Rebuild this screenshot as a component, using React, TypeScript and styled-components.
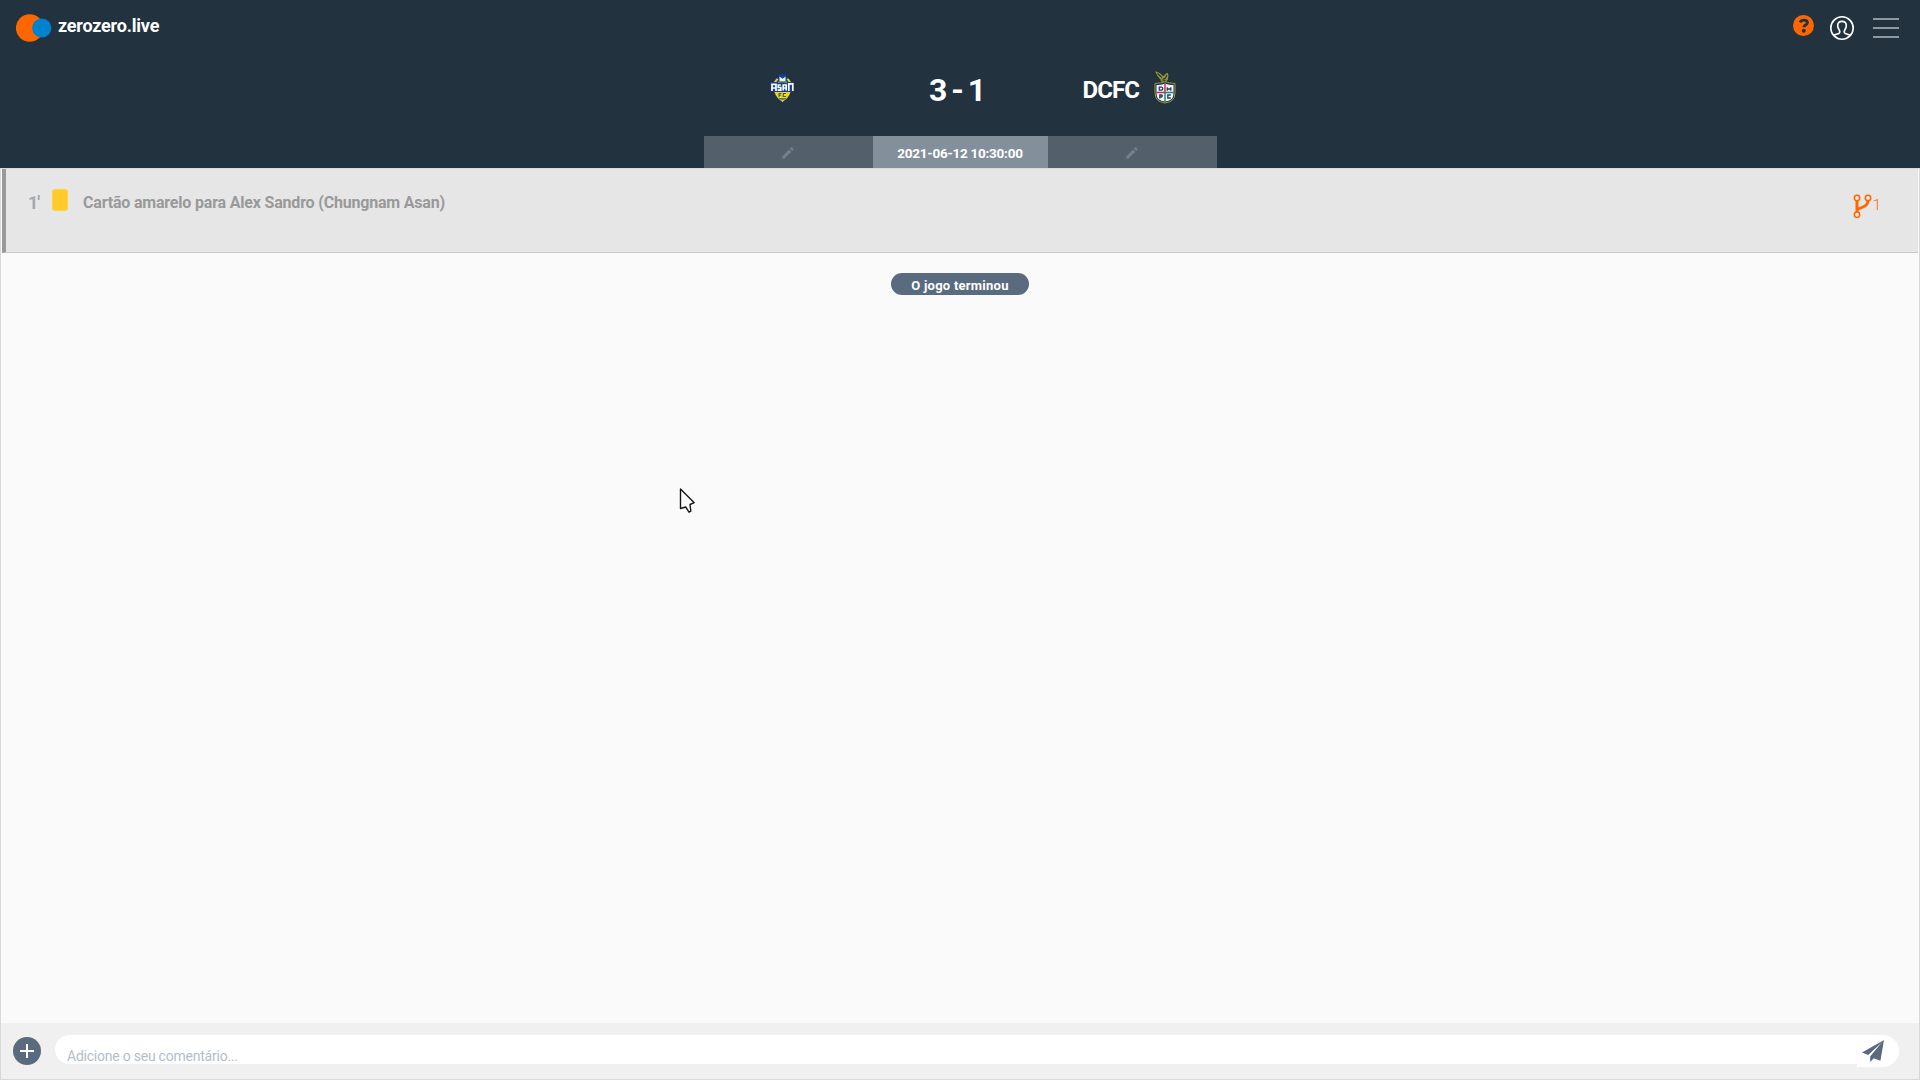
import React from "react";
import styled, { createGlobalStyle } from "styled-components";

const GlobalStyle = createGlobalStyle`
  * { box-sizing: border-box; }
  html, body { margin: 0; padding: 0; overflow: hidden; }
  body { font-family: Roboto, "Liberation Sans", sans-serif; background: #fafafa; }
  svg { display: block; flex: none; }
`;

const Page = styled.div`
  width: 1920px;
  height: 1080px;
  display: flex;
  flex-direction: column;
`;

const Header = styled.header`
  height: 168px;
  background: #22323f;
  display: flex;
  flex-direction: column;
  align-items: center;
`;

const TopBar = styled.div`
  width: 100%;
  height: 56px;
  padding: 0 21px 0 16px;
  display: flex;
  justify-content: space-between;
`;

const Brand = styled.div`
  display: flex;
  align-items: flex-start;
  padding-top: 14px;
  gap: 6px;
`;

const Label = styled.span<{ $size: number; $weight?: number; $spacing?: number; $color?: string }>`
  font-size: ${(p) => p.$size}px;
  line-height: ${(p) => p.$size}px;
  font-weight: ${(p) => p.$weight ?? 700};
  letter-spacing: ${(p) => p.$spacing ?? 0}px;
  color: ${(p) => p.$color ?? "#fff"};
  white-space: nowrap;
`;

const BrandName = styled(Label)`
  margin-top: 3px;
`;

const Actions = styled.div`
  display: flex;
  align-items: flex-start;
`;

const Slot = styled.div<{ $top: number; $right?: number }>`
  padding-top: ${(p) => p.$top}px;
  margin-right: ${(p) => p.$right ?? 0}px;
`;

const MenuIcon = styled.div`
  width: 26px;
  height: 20px;
  margin-top: 18px;
  display: flex;
  flex-direction: column;
  justify-content: space-between;
  i { height: 2px; background: #8f989e; }
`;

const Scoreboard = styled.div`
  width: 513px;
  height: 80px;
  display: grid;
  grid-template-columns: 169px 175px 169px;
`;

const Team = styled.div<{ $left: number; $top: number }>`
  display: flex;
  align-items: flex-start;
  padding: ${(p) => p.$top}px 0 0 ${(p) => p.$left}px;
`;

const TeamName = styled(Label)`
  width: 71px;
  margin-top: 7px;
`;

const Score = styled.div`
  display: flex;
  justify-content: center;
  padding: 18px 7px 0 0;
`;

const Tabs = styled.div`
  width: 513px;
  height: 32px;
  display: grid;
  grid-template-columns: 169px 175px 169px;
`;

const Tab = styled.div<{ $active?: boolean }>`
  display: flex;
  align-items: center;
  justify-content: center;
  padding-top: ${(p) => (p.$active ? 4 : 2)}px;
  background: ${(p) => (p.$active ? "#83909c" : "#53606c")};
`;

const Body = styled.main`
  flex: 1;
  display: flex;
  flex-direction: column;
  border: 1px solid #d9d9d9;
  background: #fafafa;
`;

const EventRow = styled.section`
  height: 84px;
  margin: 0 1px;
  padding: 20px 37px 0 22px;
  display: flex;
  align-items: flex-start;
  background: #e6e6e6;
  border-left: 4px solid #999;
  border-bottom: 1px solid #c8c8c8;
`;

const Minute = styled(Label)`
  width: 24px;
  margin-top: 5px;
`;

const YellowCard = styled.div`
  width: 16px;
  height: 22px;
  border-radius: 3px;
  border: 1px solid #ffd53d;
  background: #ffca2c;
  margin-right: 15px;
`;

const EventText = styled(Label)`
  flex: 1;
  margin-top: 6px;
`;

const Fork = styled.div`
  display: flex;
  align-items: flex-start;
  gap: 1px;
  padding-top: 5px;
`;

const ForkCount = styled(Label)`
  margin-top: 4px;
`;

const Feed = styled.section`
  flex: 1;
  display: flex;
  justify-content: center;
  align-items: flex-start;
  padding-top: 20px;
`;

const StatusPill = styled.div`
  width: 138px;
  height: 22px;
  border-radius: 11px;
  background: #5a6b7f;
  display: flex;
  justify-content: center;
  padding-top: 6px;
`;

const Footer = styled.footer`
  height: 56px;
  background: #f0f0f0;
  display: flex;
  align-items: flex-start;
  padding: 12px 20px 0 12px;
`;

const AddButton = styled.div`
  width: 28px;
  height: 28px;
  margin: 2px 14px 0 0;
  border-radius: 50%;
  background: #5a6b7f;
  display: flex;
  align-items: center;
  justify-content: center;
`;

const Field = styled.div`
  flex: 1;
  height: 29px;
  border-radius: 15px 0 0 15px;
  background: #fff;
  padding: 14px 0 0 12px;
  display: flex;
`;

const SendButton = styled.div`
  width: 42px;
  height: 32px;
  border-radius: 0 16px 16px 0;
  background: #fff;
  padding: 5px 0 0 5px;
`;

const Pointer = styled.div`
  position: absolute;
  left: 679px;
  top: 487px;
`;

const Logo = () => (
  <svg width="36" height="28" viewBox="0 0 36 28">
    <circle cx="13.7" cy="14" r="13.8" fill="#ff6600" />
    <circle cx="25.7" cy="14" r="9.6" fill="#0082cf" />
  </svg>
);

const HelpIcon = () => (
  <svg width="22" height="22" viewBox="0 0 22 22">
    <circle cx="10.5" cy="10.5" r="10.5" fill="#ff6600" />
    <path d="M6.800 7.300C7.800 5.700 9.100 5.100 10.700 5.100c2.200 0 3.700 1 3.700 2.700 0 2.200-3.500 2.200-3.500 4.400" fill="none" stroke="#22323f" strokeWidth="2.900" />
    <circle cx="10.8" cy="15.700" r="2" fill="#22323f" />
  </svg>
);

const UserIcon = () => (
  <svg width="24" height="24" viewBox="0 0 24 24" fill="none" stroke="#fff" strokeWidth="1.6">
    <circle cx="12" cy="12" r="11.2" />
    <path d="M3.8 19.2c1.5-1 4-1 5.2-1.9 1-.8.8-2.3.2-3.3C7.9 12 7.600 10.800 7.700 9.300c.1-2.500 1.900-3.900 4.300-3.900s4.200 1.400 4.300 3.900c.1 1.500-.2 2.700-1.500 4.700-.6 1-.8 2.500.2 3.300 1.200.9 3.700.9 5.200 1.900" />
  </svg>
);

const PencilIcon = () => (
  <svg width="12" height="12" viewBox="0 0 12 12" fill="#75808a">
    <path d="M.4 9.200 7.100 2.500l2.300 2.300L2.700 11.500H.4z" />
    <path d="M7.900 1.700 9.100.500q.5-.4 1 0l1.300 1.300q.4.500 0 1L10.200 4z" />
  </svg>
);

const AsanCrest = () => (
  <svg width="27" height="32" viewBox="0 0 27 32">
    <path d="M6.500 7 10 4V1l2 2 1.500-2L15 3l2-2v3l3.500 3 2 3H26l-1.500 2v7.500h-3c-1 5-4.500 8-8.200 11C9 27.500 6 24.500 5 19.500H1.500V12L0 10h4.500z" fill="#153f92" />
    <path d="M7.500 6.500 5 10h2.300L9.500 7zm12 0L22 10h-2.300l-2.200-3zM5.500 20h16c-1 4-4 7-8 10-4-3-7-6-8-10z" fill="#f4d619" />
    <path d="M10.500 4.500V9h6V4.500l-3 2.300z" fill="#e9edf4" />
    <path d="M9 10.300q4.500-1.200 9 0" stroke="#a9a636" strokeWidth="1.200" fill="none" />
    <path d="M3 19v-6.700h4V19M3 16h4M11.800 13H9.300v2.500h2.500v2.700H8.600M14.200 18.500V13h3v5.500m-3-2.500h3M19.800 19v-7.200h4V19" fill="none" stroke="#fff" strokeWidth="1.700" />
    <path d="M12.500 21.500H10V25m0-1.800h2.200M17 21.500h-2.700v3H17M10 26.800h7" fill="none" stroke="#30548a" strokeWidth="1.100" />
    <path d="M11 28.200q2.500-1.500 5 0" fill="none" stroke="#756f22" strokeWidth=".8" />
  </svg>
);

const DaejeonCrest = () => (
  <svg width="22" height="33" viewBox="0 0 22 33">
    <path d="M1 0c2 1.200 4 1.300 6 3l2 2c2 0 2-2.500 4.500-3.200L14.500 4l-.6 4.500-2 2.500H8L6.500 9.500C8 8.500 4 7 4.500 6 3 5 2.500 3 1 0z" fill="#98952e" />
    <path d="m3.500 2.500 4.500 4m.5 2 3-1.500 1.500-3M8.500 10l3-.8" stroke="#203a5b" strokeWidth="1.200" fill="none" />
    <path d="M11 10.500c3 1.500 6 1.500 10 2v9q0 6-3 8-2 1.500-7 2.500-5-1-7-2.500-3-2-3-8v-9c4-.5 7-.5 10-2z" fill="#1d334e" stroke="#a09a30" strokeWidth="1" />
    <path d="M11 12.500c3 1.500 5.500 1.500 8.500 1.500v7q0 6-2.500 7.500-2 1.500-6 2-4-.5-6-2Q2.500 27 2.500 21v-7c3 0 5.500 0 8.500-1.500z" fill="#f1f5f5" />
    <path d="M11 12.500v8.500M2.500 21.500H11" stroke="#c72b50" strokeWidth="1.500" />
    <path d="M11 21.500h8.500M11 21.500v9" stroke="#168d73" strokeWidth="1.500" />
    <path d="M5.300 16.200v3h2q1.500-.3 1.500-1.500t-1.500-1.500zm8 0v3.600m3.500-3.600v3.600m-3.500-1.800h3.500M5.800 27.500V24h2q1.200 1-.2 2H5.800m11-2h-3v3h3" fill="none" stroke="#293c63" strokeWidth="1.300" />
  </svg>
);

const ForkIcon = () => (
  <svg width="19" height="25" viewBox="0 0 19 25" fill="none" stroke="#ff6600">
    <path d="M4 6.500v11.500" strokeWidth="3" />
    <path d="M15 6.500c0 3.500-1.500 5-4.500 6.200L4 15.500" strokeWidth="2.700" />
    <g strokeWidth="1.500" fill="#eee9e4">
      <circle cx="4" cy="4" r="2.700" />
      <circle cx="15" cy="4" r="2.700" />
      <circle cx="4" cy="20.700" r="2.700" />
    </g>
  </svg>
);

const PlusIcon = () => (
  <svg width="14" height="14" viewBox="0 0 14 14" stroke="#fff" strokeWidth="2">
    <path d="M7 0v14M0 7h14" />
  </svg>
);

const SendIcon = () => (
  <svg width="22" height="23" viewBox="0 0 22 23" fill="#5a6b7f">
    <path d="M22 0 0 12.500l6.200 2.500L19 3.500z" />
    <path d="M22 0 8.200 15v7l3.500-3.800 6.700 2.500z" />
    <path d="M6.700 15.300 20 2.200 8.200 16.500z" fill="#fff" />
    <path d="M21 1.500 8.800 16v4.500l3-2.800 6.200 2z" />
  </svg>
);

const CursorArrow = () => (
  <svg width="18" height="28" viewBox="0 0 18 28">
    <path d="M1.500 2v19.500L6.700 20l3.300 5.200 1.800-1-.8-6.700 4.200-1.800z" fill="#fff" stroke="#15151b" strokeWidth="1.400" strokeLinejoin="round" />
  </svg>
);

export default function App() {
  return (
    <Page>
      <GlobalStyle />
      <Header>
        <TopBar>
          <Brand>
            <Logo />
            <BrandName $size={18} $spacing={-0.2}>zerozero.live</BrandName>
          </Brand>
          <Actions>
            <Slot $top={15} $right={15}><HelpIcon /></Slot>
            <Slot $top={16} $right={19}><UserIcon /></Slot>
            <MenuIcon><i /><i /><i /></MenuIcon>
          </Actions>
        </TopBar>
        <Scoreboard>
          <Team $left={65} $top={16}><AsanCrest /></Team>
          <Score><Label $size={32} $spacing={-2}>3 - 1</Label></Score>
          <Team $left={35} $top={15}>
            <TeamName $size={24} $spacing={-0.9}>DCFC</TeamName>
            <DaejeonCrest />
          </Team>
        </Scoreboard>
        <Tabs>
          <Tab><PencilIcon /></Tab>
          <Tab $active><Label $size={13.5} $spacing={-0.25}>2021-06-12 10:30:00</Label></Tab>
          <Tab><PencilIcon /></Tab>
        </Tabs>
      </Header>
      <Body>
        <EventRow>
          <Minute $size={18} $weight={700} $spacing={-1} $color="#a3a8b3">1'</Minute>
          <YellowCard />
          <EventText $size={16} $spacing={-0.19} $color="#999">Cartão amarelo para Alex Sandro (Chungnam Asan)</EventText>
          <Fork>
            <ForkIcon />
            <ForkCount $size={15} $weight={300} $color="#ff6600">1</ForkCount>
          </Fork>
        </EventRow>
        <Feed>
          <StatusPill><Label $size={13} $spacing={0.25}>O jogo terminou</Label></StatusPill>
        </Feed>
        <Footer>
          <AddButton><PlusIcon /></AddButton>
          <Field><Label $size={14} $weight={400} $spacing={-0.23} $color="#b5bdc7">Adicione o seu comentário...</Label></Field>
          <SendButton><SendIcon /></SendButton>
        </Footer>
      </Body>
      <Pointer><CursorArrow /></Pointer>
    </Page>
  );
}
